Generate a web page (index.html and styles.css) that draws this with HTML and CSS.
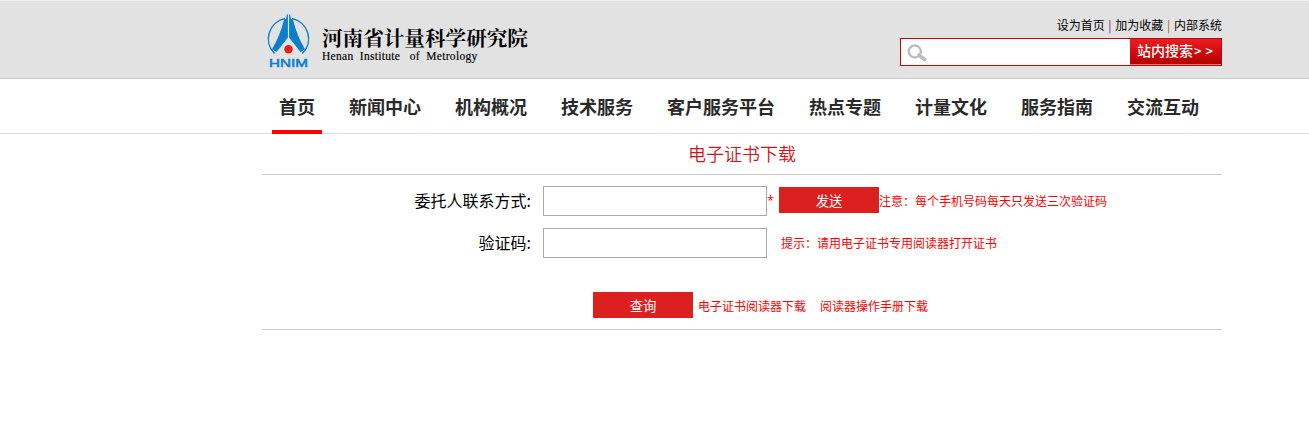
FILE: index.html
```html
<!DOCTYPE html>
<html lang="zh-CN">
<head>
<meta charset="utf-8">
<title>电子证书下载</title>
<link rel="stylesheet" href="styles.css">
</head>
<body>
<header class="header">
  <div class="wrap header-inner">
    <div class="brand">
      <svg class="emblem" width="46" height="56" viewBox="0 0 46 56">
        <path d="M19 5.500A20.700 20.700 0 0 0 8.500 40.500M26 5.500A20.700 20.700 0 0 1 36.500 40.500" fill="none" stroke="#0b7fc9" stroke-width="1.500"/>
        <path d="M21.900 1.500 21.900 24.500 10.500 39 6 36.300Q14 23 18 6.500L20.200 6 20.800 1.500ZM23.100 1.500 23.100 24.500 34.500 39 39 36.300Q31 23 27 6.500L24.800 6 24.200 1.500Z" fill="#0b7fc9"/>
        <circle cx="22.500" cy="36.300" r="4.200" fill="#e32219"/>
        <text class="emblem-text" x="3" y="53.800" textLength="39" lengthAdjust="spacingAndGlyphs">HNIM</text>
      </svg>
      <div class="brand-name">
        <div class="brand-cn">河南省计量科学研究院</div>
        <div class="brand-en">Henan&nbsp; Institute&nbsp;&nbsp; of&nbsp; Metrology</div>
      </div>
    </div>
    <div class="tools">
      <div class="quick"><a>设为首页</a> <i class="bar-purple">|</i> <a>加为收藏</a> <i class="bar-brown">|</i> <a>内部系统</a></div>
      <div class="search">
        <div class="search-box">
          <svg width="21" height="18" viewBox="0 0 21 18"><circle cx="7.800" cy="7.500" r="6" fill="none" stroke="#bdbdbd" stroke-width="2.400"/><path d="M12 11.200 17.800 15.500" stroke="#bdbdbd" stroke-width="3.600" stroke-linecap="round"/></svg>
        </div>
        <div class="search-btn">站内搜索<span class="arrows">&gt;&gt;</span></div>
      </div>
    </div>
  </div>
</header>
<nav class="nav">
  <div class="wrap nav-inner">
    <a class="active">首页</a><a>新闻中心</a><a>机构概况</a><a>技术服务</a><a>客户服务平台</a><a>热点专题</a><a>计量文化</a><a>服务指南</a><a>交流互动</a>
  </div>
</nav>
<main class="wrap">
  <h1 class="title">电子证书下载</h1>
  <form class="form">
    <div class="row">
      <label class="label">委托人联系方式:</label>
      <input class="field" type="text">
      <span class="star">*</span>
      <button class="btn" type="button">发送</button>
      <span class="note">注意：每个手机号码每天只发送三次验证码</span>
    </div>
    <div class="row">
      <label class="label">验证码:</label>
      <input class="field" type="text">
      <span class="note hint">提示：请用电子证书专用阅读器打开证书</span>
    </div>
    <div class="actions">
      <button class="btn" type="button">查询</button>
      <a class="note link">电子证书阅读器下载</a>
      <a class="note link-next">阅读器操作手册下载</a>
    </div>
  </form>
</main>
</body>
</html>
```
FILE: styles.css
```css
* { box-sizing: border-box; }
body {
  margin: 0;
  background: #fff;
  color: #000;
  font: 12px/18px "Noto Sans CJK SC", sans-serif;
}
.wrap { width: 960px; margin-left: 262px; }
.header {
  height: 79px;
  background: #e2e2e2;
  border-top: 1px solid #f0f0f0;
  border-bottom: 1px solid #c8c8c8;
}
.header-inner { display: flex; justify-content: space-between; }
.brand { display: flex; padding: 12px 0 0 4px; }
.emblem { display: block; flex: none; }
.emblem-text { font: 11px "Liberation Sans", sans-serif; fill: #0b7fc9; stroke: #0b7fc9; stroke-width: .5px; }
.brand-name { padding: 11px 0 0 10px; white-space: nowrap; }
.brand-cn {
  font: 700 20.6px/26px "Noto Serif CJK SC", "Noto Sans CJK SC", serif;
}
.brand-en { font: 11.5px/12px "Liberation Serif", serif; letter-spacing: .3px; -webkit-text-stroke: .15px #000; }
.tools { width: 322px; padding-top: 15px; }
.quick { text-align: right; line-height: 18px; white-space: nowrap; word-spacing: 1px; }
.quick i { font-style: normal; }
.bar-purple { color: #800080; }
.bar-brown { color: #a0621e; }
.search { display: flex; height: 28px; margin-top: 4px; border: 1px solid #c5000a; }
.search-box { width: 229px; padding: 5px 0 0 6px; background: #fff; }
.search-btn {
  flex: 1;
  height: 26px;
  padding-left: 7px;
  background: linear-gradient(#e91d1f, #b50000);
  border-bottom: 1px solid #d98080;
  color: #fff;
  font-size: 14px;
  font-weight: 500;
  line-height: 22px;
  white-space: nowrap;
}
.arrows { letter-spacing: 4px; padding-left: 1px; font-size: 13px; }
.nav { height: 55px; border-bottom: 1px solid #dcdcdc; }
.nav-inner { display: flex; gap: 20px; padding-left: 10px; }
.nav a {
  height: 55px;
  padding: 0 7px;
  color: #2a2a2a;
  font-size: 18px;
  font-weight: bold;
  line-height: 54px;
  white-space: nowrap;
}
.nav .active { border-bottom: 4px solid #f00; }
.title {
  height: 41px;
  margin: 0;
  border-bottom: 1px solid #ccc;
  color: #d01418;
  font-size: 18px;
  font-weight: 350;
  line-height: 38px;
  text-align: center;
}
.form { height: 155px; padding-top: 11px; border-bottom: 1px solid #ccc; }
.row { display: flex; align-items: center; height: 30px; margin-bottom: 12px; }
.label { width: 269px; margin-right: 12px; font-size: 16px; line-height: 28px; height: 30px; text-align: right; }
.field { width: 224px; height: 30px; padding: 0 4px; border: 1px solid #a9a9a9; background: #fff; }
.star { width: 12px; height: 20px; color: #f00; font: 13px/18px "Open Sans", sans-serif; }
.btn {
  width: 100px;
  height: 26px;
  padding: 0;
  border: 0;
  background: #dc1f1f;
  color: #fff;
  font: 13.333px/28px "Noto Sans CJK SC", sans-serif;
}
.row .btn { margin-top: -2px; }
.note { color: #f00; white-space: nowrap; }
.hint { margin-left: 14px; }
.actions { display: flex; align-items: center; padding: 22px 0 0 331px; }
.link { margin-left: 5px; padding-top: 1px; }
.link-next { margin-left: 14px; padding-top: 1px; }
```
